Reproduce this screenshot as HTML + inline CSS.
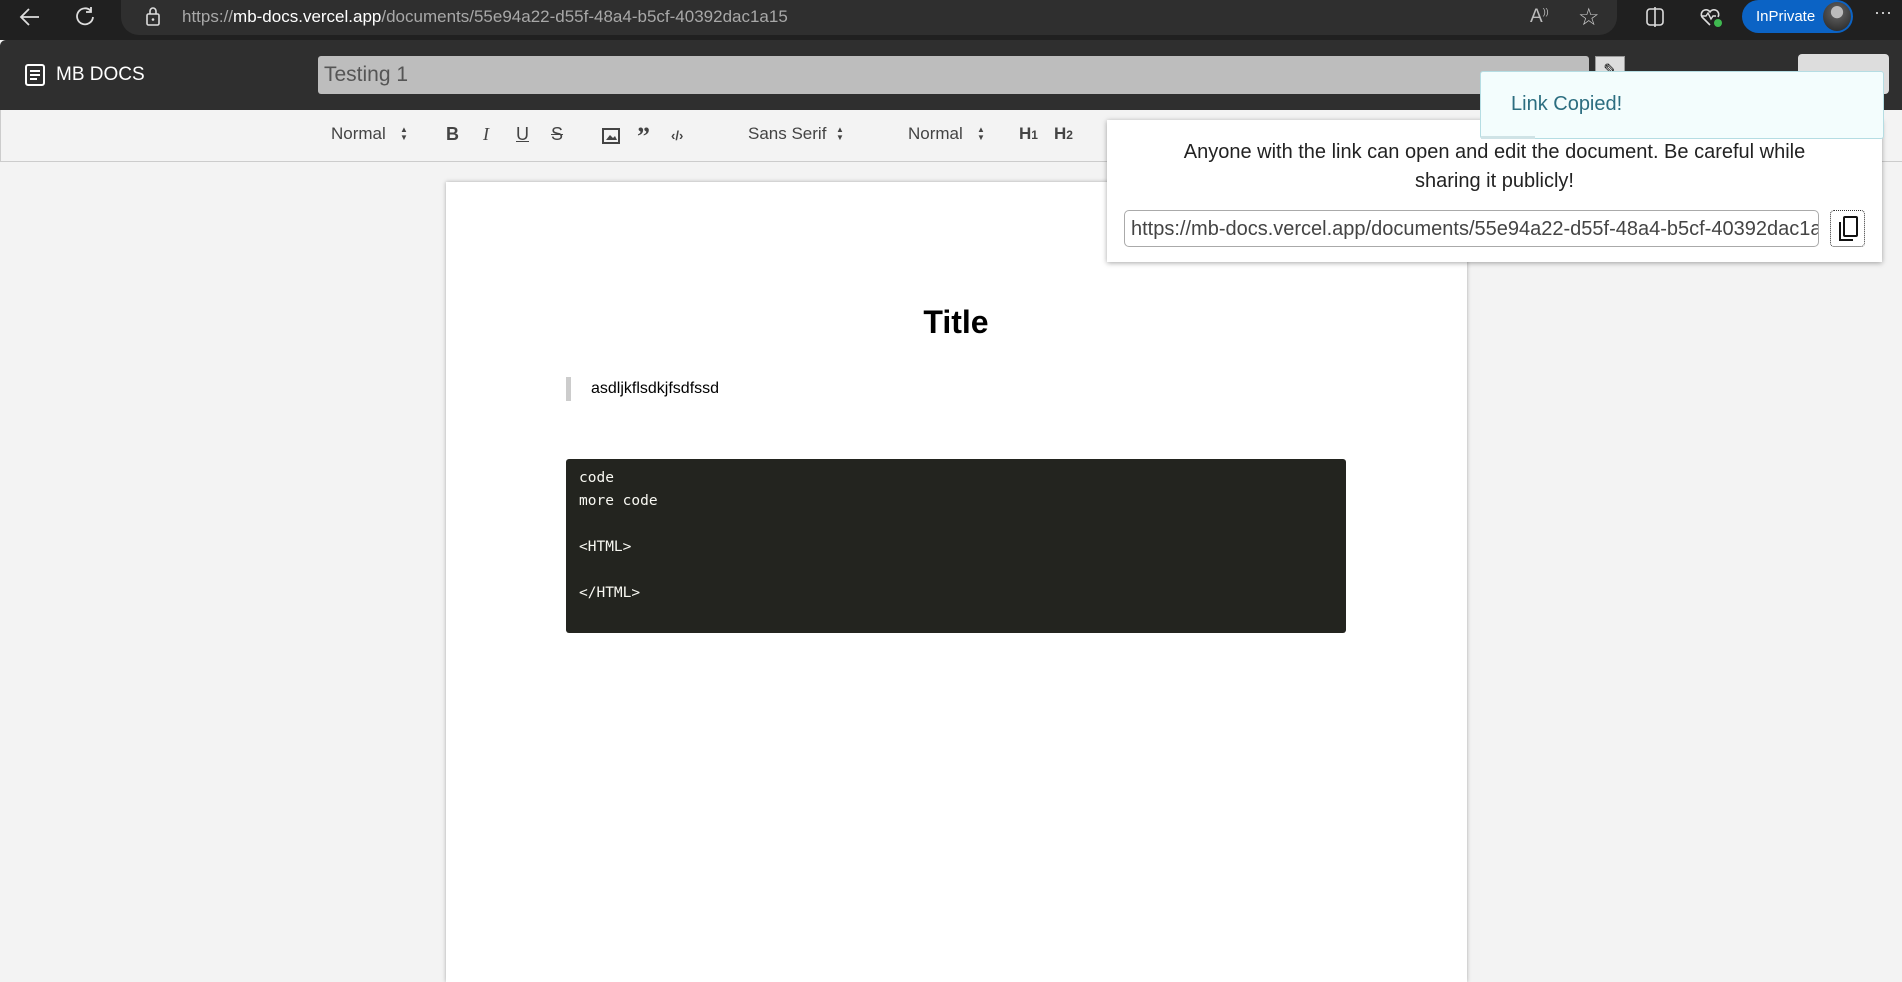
<!DOCTYPE html>
<html><head><meta charset="utf-8"><style>
*{margin:0;padding:0;box-sizing:border-box}
body{width:1902px;height:972px;overflow:hidden;background:#f3f3f3;font-family:"Liberation Sans",sans-serif;position:relative}
.abs{position:absolute}
.chrome{left:0;top:0;width:1902px;height:40px;background:#202020}
.pill{left:121px;top:0;width:1496px;height:35px;background:#2f2f2f;border-radius:0 0 18px 18px}
.url{left:182px;top:7px;font-size:17px;color:#a8a8a8;white-space:nowrap}
.url b{color:#fff;font-weight:normal}
.hdr{left:0;top:40px;width:1902px;height:70px;background:#2f2f2f;border-radius:6px 0 0 0}
.tb{left:0;top:110px;width:1902px;height:52px;background:#f3f3f3;border-bottom:1px solid #ccc;border-left:1px solid #ccc}
.ti{font-size:17px;color:#444;top:124px}
.doc{left:446px;top:182px;width:1021px;height:800px;background:#fff;box-shadow:0 0 4px rgba(0,0,0,.3)}
.code{left:566px;top:459px;width:780px;height:174px;background:#23241f;border-radius:3px;color:#f8f8f2;font-family:"DejaVu Sans Mono","Liberation Mono",monospace;font-size:14.5px;padding:8px 13px;line-height:23px;white-space:pre}
.pop{left:1107px;top:120px;width:775px;height:142px;background:#fff;box-shadow:0 1px 5px rgba(0,0,0,.35)}
.toast{left:1480px;top:71px;width:404px;height:68px;background:#f3fdfd;border:1px solid #b5dde3;border-radius:3px;color:#2c6e80;font-size:20px;padding:21px 0 0 30px}
</style></head><body>
<div class="abs chrome"></div>
<div class="abs pill"></div>
<svg class="abs" style="left:18px;top:6px" width="24" height="22" viewBox="0 0 24 22"><path d="M21 11H4M11 3L3 11l8 8" stroke="#ddd" stroke-width="1.8" fill="none"/></svg>
<svg class="abs" style="left:74px;top:5px" width="22" height="22" viewBox="0 0 22 22"><path d="M17 6A8 8 0 1 0 19 12M17 2v5h-5" stroke="#ddd" stroke-width="1.8" fill="none"/></svg>
<svg class="abs" style="left:145px;top:5px" width="16" height="22" viewBox="0 0 16 22"><rect x="2" y="9" width="12" height="11" rx="1.5" stroke="#ddd" stroke-width="1.6" fill="none"/><path d="M5 9V6a3 3 0 0 1 6 0v3" stroke="#ddd" stroke-width="1.6" fill="none"/><circle cx="8" cy="14.5" r="1.3" fill="#ddd"/></svg>
<div class="abs url">https://<b>mb-docs.vercel.app</b>/documents/55e94a22-d55f-48a4-b5cf-40392dac1a15</div>
<div class="abs" style="left:1530px;top:6px;color:#bbb;font-size:19px">A<sup style="font-size:9px">))</sup></div>
<div class="abs" style="left:1578px;top:3px;color:#ccc;font-size:24px">☆</div>
<svg class="abs" style="left:1645px;top:6px" width="20" height="22"><rect x="2" y="3" width="16" height="16" rx="3" stroke="#ddd" stroke-width="1.6" fill="none"/><path d="M10 1v20" stroke="#ddd" stroke-width="1.6"/></svg>
<svg class="abs" style="left:1698px;top:5px" width="26" height="26"><path d="M12 20L4 12a4.5 4.5 0 0 1 8-5 4.5 4.5 0 0 1 8 5" stroke="#ddd" stroke-width="1.6" fill="none"/><path d="M3 11h5l2-3 3 6 2-3h3" stroke="#ddd" stroke-width="1.4" fill="none"/><circle cx="20" cy="18" r="4" fill="#3fb950"/></svg>
<div class="abs" style="left:1742px;top:0;width:111px;height:33px;background:#0b63c5;border-radius:17px;color:#fff;font-size:15px;padding:8px 0 0 14px">InPrivate</div>
<div class="abs" style="left:1823px;top:2px;width:28px;height:29px;border-radius:50%;background:radial-gradient(circle at 50% 35%,#bbb 0 25%,#555 27%,#222)"></div>
<div class="abs" style="left:1874px;top:2px;color:#ddd;font-size:18px">···</div>

<div class="abs hdr"></div>
<svg class="abs" style="left:24px;top:63px" width="22" height="24" viewBox="0 0 22 24"><rect x="2" y="2" width="18" height="20" rx="2" stroke="#fff" stroke-width="2" fill="none"/><path d="M6 8h10M6 12h10M6 16h7" stroke="#fff" stroke-width="2"/></svg>
<div class="abs" style="left:56px;top:64px;color:#fff;font-size:19px">MB DOCS</div>
<div class="abs" style="left:318px;top:56px;width:1271px;height:38px;background:#bdbdbd;border-radius:3px;color:#555;font-size:21px;padding:7px 6px">Testing 1</div>
<div class="abs" style="left:1595px;top:56px;width:30px;height:30px;background:#ddd;border:1px solid #999;font-size:16px;text-align:center;line-height:28px">✎</div>
<div class="abs" style="left:1798px;top:54px;width:91px;height:40px;background:#ddd;border-radius:4px"></div>

<div class="abs tb"></div>
<div class="abs ti" style="left:331px">Normal</div>
<div class="abs" style="left:400px;top:126px;font-size:8px;line-height:8px;color:#444">▲<br>▼</div>
<div class="abs ti" style="left:446px;font-weight:bold;font-size:18px">B</div>
<div class="abs ti" style="left:483px;font-style:italic;font-size:18px;font-family:'Liberation Serif',serif">I</div>
<div class="abs ti" style="left:516px;text-decoration:underline;font-size:18px">U</div>
<div class="abs ti" style="left:551px;text-decoration:line-through;font-size:18px">S</div>
<svg class="abs" style="left:602px;top:128px" width="18" height="16"><rect x="1" y="1" width="16" height="14" stroke="#444" stroke-width="2" fill="none"/><path d="M4 12l4-5 3 3 2-2 2 4z" fill="#444"/></svg>
<div class="abs" style="left:637px;top:122px;font-size:26px;font-weight:bold;color:#444;font-family:'Liberation Serif',serif">”</div>
<div class="abs ti" style="left:671px;font-size:13px;top:128px;font-weight:bold">‹/›</div>
<div class="abs ti" style="left:748px">Sans Serif</div>
<div class="abs" style="left:836px;top:126px;font-size:8px;line-height:8px;color:#444">▲<br>▼</div>
<div class="abs ti" style="left:908px">Normal</div>
<div class="abs" style="left:977px;top:126px;font-size:8px;line-height:8px;color:#444">▲<br>▼</div>
<div class="abs ti" style="left:1019px;font-weight:bold">H<span style="font-size:12px">1</span></div>
<div class="abs ti" style="left:1054px;font-weight:bold">H<span style="font-size:12px">2</span></div>

<div class="abs doc"></div>
<div class="abs" style="left:0;width:1912px;top:304px;text-align:center;font-size:32px;font-weight:bold">Title</div>
<div class="abs" style="left:566px;top:377px;width:5px;height:24px;background:#ccc"></div>
<div class="abs" style="left:591px;top:380px;font-size:16px">asdljkflsdkjfsdfssd</div>
<div class="abs code">code
more code

&lt;HTML&gt;

&lt;/HTML&gt;</div>

<div class="abs pop"></div>
<div class="abs" style="left:1107px;top:138px;width:775px;text-align:center;font-size:20px;line-height:29px;color:#222;padding:0 50px">Anyone with the link can open and edit the document. Be careful while sharing it publicly!</div>
<div class="abs" style="left:1124px;top:210px;width:695px;height:37px;border:1px solid #aaa;border-radius:5px;font-size:20px;color:#444;padding:7px 6px;white-space:nowrap;overflow:hidden">https://mb-docs.vercel.app/documents/55e94a22-d55f-48a4-b5cf-40392dac1a15</div>
<div class="abs" style="left:1830px;top:210px;width:35px;height:37px;border:1px dotted #333;border-radius:4px"></div>
<svg class="abs" style="left:1836px;top:215px" width="24" height="28"><rect x="8" y="2" width="13" height="19" rx="1" stroke="#111" stroke-width="2" fill="none"/><path d="M4 7v18h13" stroke="#111" stroke-width="2" fill="none"/></svg>

<div class="abs toast">Link Copied!</div>
<div class="abs" style="left:1481px;top:136px;width:54px;height:3px;background:#cfe3e6"></div>
</body></html>
